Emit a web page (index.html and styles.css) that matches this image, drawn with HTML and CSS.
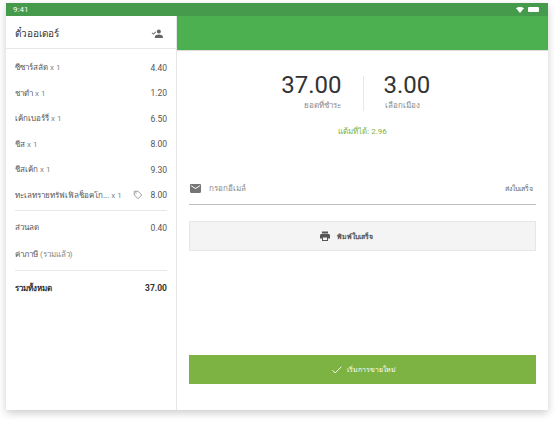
FILE: index.html
```html
<!DOCTYPE html>
<html lang="th">
<head>
  <meta charset="UTF-8" />
  <title>POS Receipt</title>
  <link rel="stylesheet" href="styles.css">
</head>
<body>
  <div class="device">
    <div class="statusbar">
      <span>9:41</span>
      <span class="status-icons">
        <svg width="8" height="6" viewBox="0 0 24 18"><path fill="#fff" d="M12 18l12-14C20.500 1.500 16.500 0 12 0S3.500 1.500 0 4z"/></svg>
        <span class="battery"></span>
      </span>
    </div>
    <div class="main">
      <!-- left order list -->
      <div class="order">
        <div class="order-head">
          <span class="order-title">ตั๋วออเดอร์</span>
          <svg width="13" height="9" viewBox="0 0 28 20"><path fill="#666" d="M17 10a4.500 4.500 0 1 0 0-9 4.500 4.500 0 0 0 0 9zm0 2c-3.500 0-9 1.700-9 5v3h18v-3c0-3.300-5.500-5-9-5zM1 9l1.400-1.400L5 10.200 9.600 5.600 11 7l-6 6z"/></svg>
        </div>
        <div class="lines">
          <div class="line"><span>ซีซาร์สลัด <span class="qty">x 1</span></span><span class="price">4.40</span></div>
          <div class="line"><span>ชาดำ <span class="qty">x 1</span></span><span class="price">1.20</span></div>
          <div class="line"><span>เค้กเบอร์รี่ <span class="qty">x 1</span></span><span class="price">6.50</span></div>
          <div class="line"><span>ชีส <span class="qty">x 1</span></span><span class="price">8.00</span></div>
          <div class="line"><span>ชีสเค้ก <span class="qty">x 1</span></span><span class="price">9.30</span></div>
          <div class="line">
            <span>ทะเลทรายทรัฟเฟิลช็อคโก... <span class="qty">x 1</span></span>
            <svg class="tag" width="10" height="10" viewBox="0 0 24 24"><path fill="none" stroke="#888" stroke-width="2" d="M3 3h9l9 9-9 9-9-9z"/><circle cx="7" cy="7" r="1.500" fill="#888"/></svg>
            <span class="price">8.00</span>
          </div>
        </div>
        <div class="lines bordered">
          <div class="line line-gap"><span>ส่วนลด</span><span class="price">0.40</span></div>
          <div class="line line-gap"><span>ค่าภาษี <span class="note">(รวมแล้ว)</span></span></div>
        </div>
        <div class="line total"><span>รวมทั้งหมด</span><span class="price">37.00</span></div>
      </div>

      <!-- right payment side -->
      <div class="pay">
        <div class="pay-band"></div>
        <div class="pay-body">
          <div class="amounts">
            <div class="amount">
              <div class="amount-num">37.00</div>
              <div class="amount-label">ยอดที่ชำระ</div>
            </div>
            <div class="amount amount-right">
              <div class="amount-num">3.00</div>
              <div class="amount-label">เลือกเมือง</div>
            </div>
          </div>
          <div class="points">แต้มที่ได้: 2.96</div>

          <div class="email">
            <svg width="11" height="9" viewBox="0 0 20 16"><path fill="#757575" d="M18 0H2C.9 0 0 .9 0 2v12c0 1.100.9 2 2 2h16c1.100 0 2-.9 2-2V2c0-1.100-.9-2-2-2zm0 4l-8 5-8-5V2l8 5 8-5z"/></svg>
            <span class="email-input">กรอกอีเมล์</span>
            <span class="email-send">ส่งใบเสร็จ</span>
          </div>

          <div class="print-btn">
            <svg width="12" height="11" viewBox="0 0 24 22"><path fill="#555" d="M19 6H5C3.300 6 2 7.300 2 9v6h4v5h12v-5h4V9c0-1.700-1.300-3-3-3zm-3 12H8v-5h8zM18 1H6v4h12z"/></svg>
            <span>พิมพ์ใบเสร็จ</span>
          </div>

          <div class="new-sale">
            <svg width="10" height="8" viewBox="0 0 22 17"><path fill="none" stroke="#fff" stroke-width="2" d="M1 9l6 6L21 1"/></svg>
            <span>เริ่มการขายใหม่</span>
          </div>
        </div>
      </div>
    </div>
  </div>
</body>
</html>
```

FILE: styles.css
```css
html, body {
  margin: 0;
  height: 100%;
}
body {
  background: #fff;
  padding: 3px 7px 13px 6px;
  box-sizing: border-box;
  font-family: "Roboto", "Noto Sans", "Liberation Sans", sans-serif;
  color: #444;
}
.device {
  height: 100%;
  display: flex;
  flex-direction: column;
  box-shadow: 0 3px 8px rgba(0, 0, 0, 0.2);
}
.statusbar {
  height: 13px;
  background: #459a4b;
  color: #fff;
  font-size: 8px;
  display: flex;
  align-items: center;
  justify-content: space-between;
  padding: 0 9px 0 7px;
  flex-shrink: 0;
}
.status-icons {
  display: flex;
  align-items: center;
  gap: 4px;
}
.battery {
  width: 11px;
  height: 5px;
  background: #fff;
  border-radius: 1px;
}
.main {
  flex: 1;
  display: flex;
  min-height: 0;
}

/* Order */
.order {
  width: 171px;
  background: #fff;
  border-right: 1px solid #e6e6e6;
  box-sizing: border-box;
  flex-shrink: 0;
}
.order-head {
  height: 33px;
  padding: 2px 12px 0 9px;
  box-sizing: border-box;
  display: flex;
  align-items: center;
  justify-content: space-between;
  border-bottom: 1px solid #e8e8e8;
}
.order-title {
  font-size: 10px;
  color: #333;
}
.lines {
  padding: 6px 9px 2px 9px;
}
.line {
  height: 25.5px;
  display: flex;
  align-items: center;
  justify-content: space-between;
  font-size: 8px;
  color: #555;
}
.price {
  font-size: 8.500px;
}
.qty {
  color: #888;
}
.note {
  color: #888;
}
.lines.bordered {
  border-top: 1px solid #e8e8e8;
  margin: 0 9px;
  padding: 3px 0 2px;
}
.line-gap {
  height: 27px;
}
.tag {
  margin-left: auto;
  margin-right: 7px;
}
.line.total {
  margin: 0 9px;
  border-top: 1px solid #e8e8e8;
  height: 34px;
  font-weight: bold;
  color: #333;
}

/* Payment */
.pay {
  flex: 1;
  display: flex;
  flex-direction: column;
  background: #fff;
  min-width: 0;
}
.pay-band {
  height: 34px;
  background: #4caf50;
  border-bottom: 1px solid #ddd;
}
.pay-body {
  flex: 1;
  padding: 25px 12px 26px;
  display: flex;
  flex-direction: column;
}
.amounts {
  display: grid;
  grid-template-columns: 1fr 1fr;
}
.amount {
  text-align: right;
  padding-right: 21px;
}
.amount-right {
  border-left: 1px solid #e8e8e8;
  padding: 0 0 0 20px;
  text-align: left;
}
.amount-num {
  font-size: 24px;
  line-height: 18px;
  color: #333;
}
.amount-label {
  margin-top: 7px;
  padding: 0 1px;
  font-size: 8px;
  line-height: 10px;
  color: #888;
}
.points {
  margin-top: 14px;
  text-align: center;
  font-size: 8px;
  line-height: 13px;
  color: #7cb342;
}
.email {
  margin-top: 34px;
  height: 32px;
  display: flex;
  align-items: center;
  gap: 8px;
  border-bottom: 1px solid #bdbdbd;
  padding-left: 1px;
  font-size: 8px;
  color: #888;
}
.email-input {
  flex: 1;
}
.email-send {
  font-size: 7px;
  color: #666;
  margin-right: 3px;
}
.print-btn {
  margin-top: 16px;
  height: 30px;
  padding-right: 34px;
  display: flex;
  align-items: center;
  justify-content: center;
  gap: 6px;
  background: #f4f4f4;
  border: 1px solid #e6e6e6;
  box-sizing: border-box;
  font-size: 7px;
  font-weight: bold;
  color: #555;
}
.new-sale {
  margin-top: auto;
  height: 29px;
  padding-left: 2px;
  display: flex;
  align-items: center;
  justify-content: center;
  gap: 5px;
  background: #7cb342;
  color: #fff;
  font-size: 7px;
}
```
